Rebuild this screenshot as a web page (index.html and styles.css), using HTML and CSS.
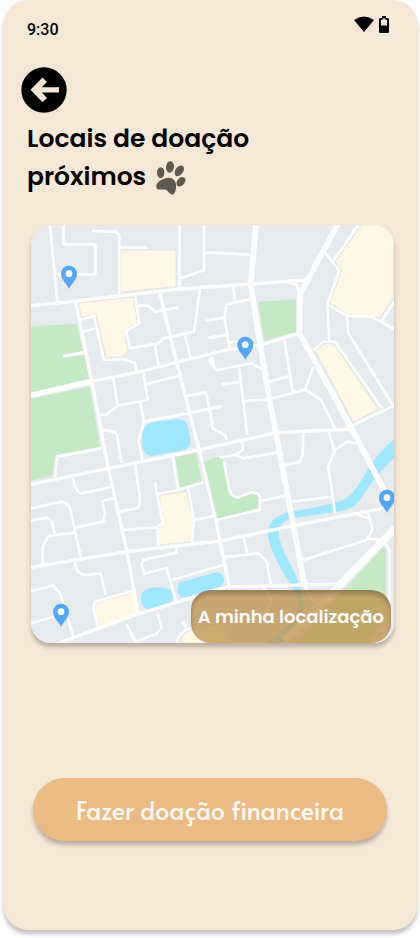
FILE: index.html
```html
<!DOCTYPE html>
<html lang="pt">
<head>
<meta charset="utf-8">
<meta name="viewport" content="width=device-width, initial-scale=1">
<title>Locais de doação próximos</title>
<link rel="stylesheet" href="styles.css">
</head>
<body>
<div class="screen">
  <header class="status">
    <time class="clock">9:30</time>
    <div class="indicators">
      <svg width="20" height="16" viewBox="0 0 20 16" aria-hidden="true"><path d="M0 4Q10-3 20 4L10 16Z"/></svg>
      <svg width="10" height="17" viewBox="0 0 10 17" aria-hidden="true"><path fill-rule="evenodd" d="M3 0h4v2h1.500Q10 2 10 3.500v12q0 1.500-1.500 1.500h-7Q0 17 0 15.500v-12Q0 2 1.500 2H3ZM2 4v5.500h6V4H6.500V2.500h-3V4Z"/></svg>
    </div>
  </header>

  <main class="content">
    <a class="back" href="#" aria-label="Voltar">
      <svg width="46" height="46" viewBox="0 0 46 46" aria-hidden="true"><circle cx="23" cy="23" r="22.700"/><path class="arrow" d="M9.500 22.800 21.500 10.500 26 15 20.700 20.300H38V25.600H20.700L26 31 21.500 35.300Z"/></svg>
    </a>
    <h1 class="title">Locais de doação<br>próximos
      <svg class="paw" width="30" height="34" viewBox="0 0 30 34" aria-hidden="true">
        <ellipse cx="4.700" cy="11.700" rx="3.700" ry="5.500"/>
        <ellipse cx="14" cy="6" rx="4" ry="5.800" transform="rotate(5 14 6)"/>
        <ellipse cx="23.300" cy="9.800" rx="3.800" ry="6" transform="rotate(36 23.300 9.800)"/>
        <ellipse cx="25" cy="20.700" rx="3.700" ry="5.400" transform="rotate(42 25 20.700)"/>
        <path d="M.3 25C1 20 7 18 11.500 16.800 16 16 19.500 19 20 23.500 20.300 27 19.500 32.500 17 33.400 13.500 34.300 12.500 29 8.500 28.500 5 28 0 30 .3 25Z"/>
      </svg>
    </h1>

    <section class="map" aria-label="Mapa">
      <svg class="map-art" viewBox="33 30 1089 1254" aria-hidden="true">
        <defs><path id="pin" d="M0 0C-5-14-24-28-24-46A24 24 0 0 1 24-46C24-28 5-14 0 0Z"/></defs>
        <path class="land" d="M33 30h1089v1254H33Z"/>
        <g class="park">
          <path d="M33 334 170 326 210 495 33 533ZM33 550 210 515 240 695 105 720 98 782 33 797Z"/>
          <path d="M715 260 828 253V350L733 378Z"/>
          <path d="M465 725 528 713 545 797 510 813 480 817Z"/>
          <path d="M550 740 592 727Q606 724 612 740L626 820Q628 840 640 845 650 852 665 846L695 834Q715 836 715 850V880L588 913Z"/>
          <path d="M1090 995 1098 1005V1205L1040 1290H820Z"/>
        </g>
        <g class="block">
          <path d="M303 105H468V215L303 232Z"/>
          <path d="M175 264 340 246 353 325 315 345 322 405 308 425 258 428 228 298 185 308Z"/>
          <path d="M1025 30H1122V245L1080 310 1055 303 980 298 928 265 965 168 945 140Z"/>
          <path d="M885 405 915 385 942 388 1075 582 1000 622Z"/>
          <path d="M418 843 498 828 520 915 512 980 415 990V940L430 928Z"/>
          <path d="M230 1163 340 1132 352 1195 240 1235 222 1185Z"/>
          <path d="M480 1284Q490 1250 515 1245L610 1225 630 1284Z"/>
        </g>
        <g class="water">
          <path d="M367 650Q375 628 398 622L470 612Q495 610 503 630L512 680Q510 698 492 705L400 722Q375 724 367 700Z"/>
          <path d="M362 1150Q363 1120 400 1118 455 1110 459 1145 455 1170 425 1178L390 1187Q365 1182 362 1150Z"/>
          <path d="M475 1110Q474 1103 490 1099L590 1072Q610 1070 612 1095 610 1113 590 1118L500 1147Q475 1150 472 1125Z"/>
          <path d="M1122 673Q1070 715 1030 785 1000 840 970 855 920 873 810 890 745 905 743 955 750 1015 810 1105 840 1155 830 1190 820 1225 735 1285H785Q850 1225 853 1175 852 1135 820 1065 770 975 777 945 785 915 820 910L950 890Q1000 885 1020 855 1070 775 1122 730Z"/>
        </g>
        <g class="street">
          <path d="M90 30 112 262M130 30V88H226V178H112M216 48 288 50Q298 54 298 70V240M298 98H380M478 30V216M552 30V166L482 190M552 112 690 119"/>
          <path d="M540 222 522 350 430 370 415 385 330 400 318 348 358 325 345 240M352 272H385L405 290 475 278M405 388 415 450M495 358 512 430M555 318 613 307M565 368 620 360"/>
          <path d="M182 315 222 302 252 435 310 432 345 445 350 470M185 352 225 340M280 490 293 572 258 600H235M293 572 383 555 370 472M380 507 475 483"/>
          <path d="M360 560 372 620 505 595 600 575M372 620 355 680 368 735M245 645 280 650Q290 652 292 665L305 745M495 545 558 532 578 640 615 660 620 675M568 430Q575 460 590 465L695 445 730 465"/>
        </g>
        <g class="street" transform="translate(570)">
          <path d="M445 30 368 140M343 110 388 168 352 268 410 302 485 305 552 342M515 318 552 260M352 268 358 375M410 302 415 355 548 570M310 405 340 380H375L515 580M425 632 552 572"/>
          <path d="M225 200 260 210 268 240M70 210 75 260M120 253 50 268 43 310 60 405M0 315 43 307M0 368 50 360M60 382 85 378M223 375 248 530M178 500 238 483M178 552 285 524 310 455M285 524 332 553 375 640"/>
          <path d="M105 558 178 553M88 460 112 660M35 508 88 502M-5 580 35 574M0 582 8 640 45 660M5 425 15 465"/>
        </g>
        <g class="street" transform="translate(0 645)">
          <path d="M105 140 112 80 245 55M160 143Q163 185 185 190L270 172M33 235 125 215Q145 220 150 235L183 385M33 272 80 263Q98 265 103 310M68 405V350L85 318 165 308M165 293 250 275 255 250 247 213 280 205"/>
          <path d="M345 98 360 205Q360 232 350 235L300 245M310 300 410 292 428 280 405 158M412 292 415 348M458 80 475 180 415 192M475 180 550 157M505 178 522 270 515 338M522 270 580 258"/>
          <path d="M470 350V368L370 390 365 405 373 432 440 413 470 520M457 450 610 405M165 395Q165 430 195 435L242 430 257 495M340 482 225 515 220 535 235 590M33 483 100 467 120 490 160 620M33 580 100 560M320 582 345 635 410 612 425 590 413 552M488 575 500 595M470 638Q480 605 510 595"/>
        </g>
        <g class="street" transform="translate(570 645)">
          <path d="M280 390 470 330 487 300 475 250M430 250 475 265M470 325 510 330M248 215 368 200M355 0 373 62 355 110 375 250M373 62 412 35 440 42M280 5 278 75Q270 98 262 98L225 105"/>
          <path d="M200 68 98 85 75 75M98 35V60L75 75 30 82M150 213 228 197M42 95 58 180Q65 200 82 203L125 187Q150 190 150 205V240L18 270M40 382 145 370 170 395 183 465M100 320 112 370M525 340 538 360V520M285 470 315 520M160 470 185 510 160 560 60 580"/>
        </g>
        <g class="avenue">
          <path d="M33 272 170 258 350 237 480 222 690 207 860 195M168 262 215 500 265 760 320 1005 355 1200M215 499 370 468 470 442 620 405 720 390 838 355M420 235 470 442 545 735 585 905 630 1125M130 424 192 412"/>
          <path d="M33 808 265 760 465 720 770 653 1000 642M33 1057 320 1010 600 978 815 933 1090 880M625 1115 970 1107M100 1290 350 1198 625 1115"/>
        </g>
        <path class="highway" d="M33 541 215 499M708 30 692 205 720 385 748 550 815 905 855 1115M952 30 840 238 838 355 880 430 1000 650 1105 850"/>
        <path class="highway wide" d="M1125 940 955 1115 795 1275"/>
        <g class="pins"><use href="#pin" x="147" y="222"/><use href="#pin" x="676" y="435"/><use href="#pin" x="1101" y="894"/><use href="#pin" x="123" y="1236"/></g>
        <g class="pin-holes"><circle cx="147" cy="176" r="10"/><circle cx="676" cy="389" r="10"/><circle cx="1101" cy="848" r="10"/><circle cx="123" cy="1190" r="10"/></g>
      </svg>
      <button class="locate" type="button">A minha localização</button>
    </section>

    <button class="donate" type="button">Fazer doação financeira</button>
  </main>
</div>
</body>
</html>
```
FILE: styles.css
```css
* {
  box-sizing: border-box;
}

body {
  margin: 0;
  background: #fff;
  color: #000;
  font-family: Poppins, Inter, sans-serif;
}

.screen {
  margin: 0 3px 8px 4px;
  min-height: 930px;
  border-radius: 24px;
  background: #f5e8d7;
  box-shadow: 0 4px 4px rgba(0, 0, 0, .25);
}

.status {
  display: flex;
  justify-content: space-between;
  padding: 16px 28px 0 23px;
}

.clock {
  padding-top: 4px;
  font: 500 16px/20px Roboto, sans-serif;
}

.indicators {
  display: flex;
  gap: 5px;
}

.content {
  display: flex;
  flex-direction: column;
  padding: 27px 23px 88px 27px;
}

.back {
  align-self: flex-start;
  width: 46px;
  height: 46px;
  margin-left: -10px;
}

.back svg {
  display: block;
}

.arrow {
  fill: #f5e8d7;
}

.title {
  margin: 7px 0 0 -4px;
  font-size: 25px;
  font-weight: 600;
  line-height: 38px;
}

.paw {
  margin-left: 4px;
  vertical-align: middle;
  fill: #5f594f;
}

.map {
  position: relative;
  overflow: hidden;
  margin-top: 29px;
  border-radius: 20px;
  box-shadow: 0 4px 4px rgba(0, 0, 0, .25);
}

.map-art {
  display: block;
  width: 100%;
  height: auto;
}

.land { fill: #e7ebee; }
.park { fill: #c5e8c5; }
.block { fill: #fef8e6; stroke: #e4e6e4; stroke-width: 3; }
.water { fill: #9fe7ff; }

.street,
.avenue,
.highway {
  fill: none;
  stroke: #fff;
  stroke-linejoin: round;
}

.street { stroke-width: 8; }
.avenue { stroke-width: 10; }
.highway { stroke-width: 17; }
.wide { stroke-width: 22; }
.pins { fill: #52a7f8; }
.pin-holes { fill: #fff; }

.locate {
  position: absolute;
  right: 3px;
  bottom: 0;
  padding: 13px 7px;
  border: 0;
  border-radius: 20px;
  background: rgba(189, 145, 73, .76);
  box-shadow: inset 0 4px 4px rgba(0, 0, 0, .25);
  color: #fff;
  font: 600 18px/27px Poppins, Inter, sans-serif;
  white-space: nowrap;
}

.donate {
  margin: 135px 7px 0 2px;
  padding: 14px;
  border: 0;
  border-radius: 32px;
  background: #eabb85;
  box-shadow: 0 4px 4px rgba(0, 0, 0, .25);
  color: #fff8f2;
  font: 400 25px/35px Alata, Lato, sans-serif;
}
```
